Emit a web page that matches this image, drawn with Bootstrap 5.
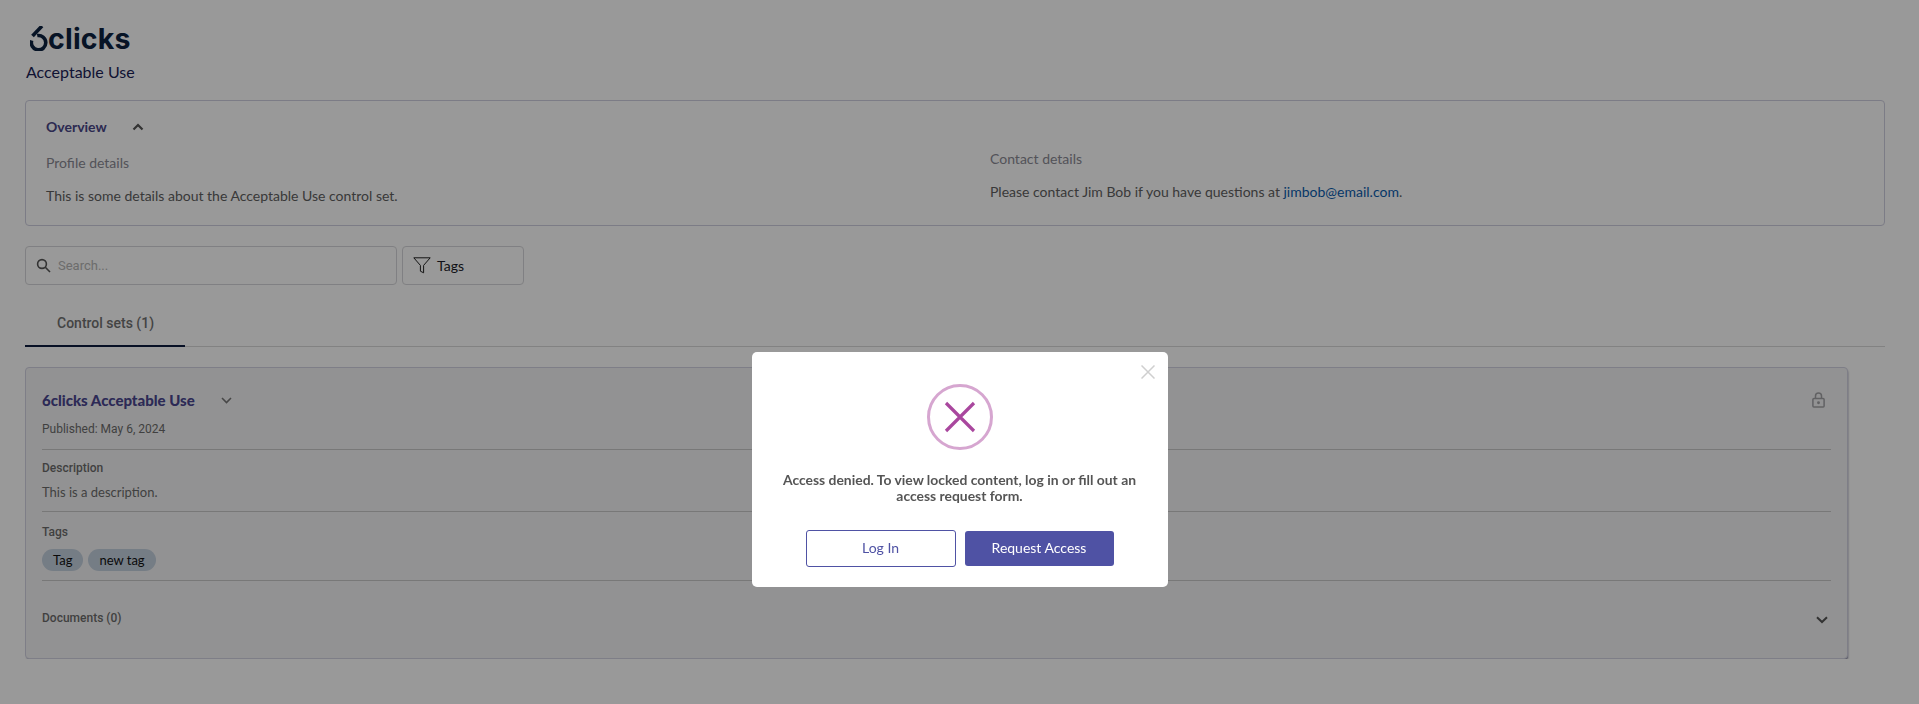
<!DOCTYPE html>
<html lang="en">
<head>
    <meta charset="UTF-8">
    <meta name="viewport" content="width=device-width, initial-scale=1.0">
    <title>Acceptable Use</title>
    <link href="https://cdn.jsdelivr.net/npm/bootstrap@5.3.0/dist/css/bootstrap.min.css" rel="stylesheet">
    <style>
        body {
            background: #fff;
            font-family: 'Lato', sans-serif;
            font-size: 14px;
            color: #555;
            overflow: hidden;
        }
        .page-wrap {
            padding: 25px 34px 0 25px;
        }
        .logo-row {
            height: 27px;
            padding-left: 5px;
            color: #0d2240;
            margin-bottom: 8px;
        }
        .logo-text {
            font-family: 'Inter', sans-serif;
            font-weight: 700;
            font-size: 28.500px;
            line-height: 27px;
            letter-spacing: .2px;
        }
        .page-title {
            font-size: 16px;
            line-height: 24px;
            color: #1b2255;
            margin: 0 0 16px 1px;
        }
        .overview-box {
            height: 126px;
            border: 1px solid #cfcfe0;
            border-radius: 4px;
            padding: 16px 20px;
        }
        .overview-head {
            color: #4a4688;
            font-weight: 700;
            line-height: 20px;
            gap: 25px;
            margin-bottom: 16px;
        }
        .ov-left {
            flex: 0 0 944px;
        }
        .ov-right {
            margin-top: -4px;
        }
        .ov-label {
            color: #8a8a94;
            line-height: 20px;
            margin-bottom: 13px;
        }
        .ov-text {
            line-height: 20px;
            color: #606060;
        }
        .ov-text a {
            color: #0b5cad;
            text-decoration: none;
        }
        .filter-row {
            gap: 5px;
            margin-top: 20px;
        }
        .search-box {
            width: 372px;
            height: 39px;
            border: 1px solid #d6d6da;
            border-radius: 4px;
            padding-left: 10px;
            gap: 7px;
        }
        .search-box input {
            border: 0;
            outline: 0;
            background: transparent;
            flex: 1;
            font-family: 'Roboto', sans-serif;
            font-size: 13px;
            padding: 0;
        }
        .search-box input::placeholder {
            color: #b5b5b5;
        }
        .tags-btn {
            width: 122px;
            height: 39px;
            border: 1px solid #d6d6da;
            border-radius: 4px;
            padding: 0 0 0 10px;
            gap: 6px;
            color: #1c1c28;
            font-size: 14px;
            background: transparent;
        }
        .tabs-line {
            margin-top: 21px;
            border-bottom: 1px solid #d9d9d9;
            height: 41px;
        }
        .tabs-line .nav-link {
            width: 160px;
            height: 41px;
            padding: 7px 0 0 32px;
            border: 0;
            border-bottom: 2px solid #0d1b3e;
            border-radius: 0;
            font-family: 'Roboto', sans-serif;
            font-weight: 500;
            font-size: 14px;
            line-height: 20px;
            color: #727272;
            background: transparent;
        }
        .set-box {
            width: 1823px;
            height: 292px;
            margin-top: 20px;
            background: #f4f4f5;
            border: 1px solid #d2d2e2;
            border-radius: 4px;
            box-shadow: 1px 2px 2px -1px rgba(40, 40, 80, .6);
            padding: 0 16px;
        }
        .set-head {
            height: 82px;
            border-bottom: 1px solid #c9c9c9;
            padding-top: 22px;
        }
        .set-title {
            color: #4a4690;
            font-weight: 900;
            font-size: 15px;
            line-height: 20px;
        }
        .title-chevron {
            margin-left: 26px;
        }
        .set-date {
            font-family: 'Roboto', sans-serif;
            font-size: 12px;
            line-height: 16px;
            color: #6c6c6c;
            margin-top: 11px;
        }
        .set-label {
            font-family: 'Roboto', sans-serif;
            font-weight: 500;
            font-size: 12px;
            line-height: 16px;
            color: #6c6c6c;
        }
        .set-row {
            border-bottom: 1px solid #c9c9c9;
        }
        .desc-row {
            height: 62px;
            padding-top: 10px;
        }
        .tags-row {
            height: 69px;
            padding-top: 12px;
        }
        .desc-text {
            font-size: 13px;
            line-height: 18px;
            color: #6c6c6c;
            margin-top: 7px;
        }
        .tag-pill {
            height: 22px;
            border-radius: 11px;
            padding: 0 11px;
            background: #c3d0de;
            color: #111;
            font-size: 13px;
            line-height: 22px;
        }
        .tag-list {
            gap: 5px;
            margin-top: 9px;
        }
        .docs-row {
            height: 73px;
            padding-right: 3px;
        }
        .docs-chevron {
            margin-top: 4px;
        }
        .lock-icon {
            margin-right: 6px;
        }
        .access-dialog {
            width: 416px;
            max-width: 416px;
            margin: 352px auto 0;
        }
        .access-content {
            height: 235px;
            border: 0;
            border-radius: 5px;
            position: relative;
        }
        .access-close {
            position: absolute;
            top: 13px;
            right: 13px;
            padding: 0;
            border: 0;
            background: transparent;
            line-height: 0;
        }
        .access-icon {
            margin-top: 32px;
        }
        .access-text {
            font-weight: 700;
            font-size: 13.900px;
            line-height: 16px;
            color: #555;
            margin-top: 22px;
            padding: 0 20px;
        }
        .access-btns {
            gap: 9px;
            margin-top: 26px;
            align-items: center;
        }
        .btn-outline-access {
            width: 150px;
            height: 37px;
            border: 1px solid #4f52a4;
            border-radius: 3px;
            color: #4f52a4;
            background: #fff;
            font-size: 14px;
            padding: 0 0 2px;
        }
        .btn-access {
            width: 149px;
            height: 35px;
            border: 0;
            border-radius: 3px;
            color: #fff;
            background: #4f52a4;
            font-size: 14px;
            padding: 0 0 2px;
        }
        .modal-backdrop {
            --bs-backdrop-opacity: .4;
        }
    </style>
</head>
<body>
    <div class="page-wrap">
        <div class="logo-row d-flex align-items-center">
            <svg width="18" height="25" viewBox="0 0 18 25" fill="none" stroke="currentColor" stroke-width="3.600">
                <path d="M12 0 2.500 10"/>
                <path d="M1.700 14.500A7.200 7.200 0 1 0 7.200 9.600"/>
            </svg>
            <span class="logo-text">clicks</span>
        </div>
        <h1 class="page-title fw-normal">Acceptable Use</h1>

        <div class="overview-box">
            <div class="overview-head d-flex align-items-center">
                <span>Overview</span>
                <svg width="12" height="8" viewBox="0 0 12 8" fill="none" stroke="#555" stroke-width="2.200"><path d="M1.500 6.500 6 2l4.500 4.500"/></svg>
            </div>
            <div class="d-flex">
                <div class="ov-left">
                    <div class="ov-label">Profile details</div>
                    <div class="ov-text">This is some details about the Acceptable Use control set.</div>
                </div>
                <div class="ov-right">
                    <div class="ov-label">Contact details</div>
                    <div class="ov-text">Please contact Jim Bob if you have questions at <a href="#">jimbob@email.com</a>.</div>
                </div>
            </div>
        </div>

        <div class="filter-row d-flex">
            <div class="search-box d-flex align-items-center">
                <svg width="15" height="15" viewBox="0 0 15 15" fill="none" stroke="#555" stroke-width="1.600"><circle cx="6" cy="6" r="4.400"/><path d="M9.300 9.300 14 14"/></svg>
                <input type="text" placeholder="Search...">
            </div>
            <button type="button" class="tags-btn btn d-flex align-items-center">
                <svg width="18" height="17" viewBox="0 0 18 17" fill="none" stroke="#222" stroke-width="1"><path d="M.8.8h16.400l-6.600 7.600v7.400l-3.200-1.600V8.400z"/></svg>
                Tags
            </button>
        </div>

        <ul class="nav tabs-line">
            <li class="nav-item"><a class="nav-link active" href="#">Control sets (1)</a></li>
        </ul>

        <div class="set-box">
            <div class="set-head">
                <div class="d-flex align-items-center">
                    <span class="set-title">6clicks Acceptable Use</span>
                    <svg class="title-chevron" width="11" height="7" viewBox="0 0 11 7" fill="none" stroke="#777" stroke-width="1.600"><path d="M1 1l4.500 4.500L10 1"/></svg>
                    <svg class="lock-icon ms-auto" width="13" height="16" viewBox="0 0 13 16" fill="none" stroke="#a2a2a6" stroke-width="1.500"><rect x=".9" y="6.500" width="11.200" height="8.500" rx="1"/><path d="M3.500 6.500V4a3 3 0 0 1 6 0v2.500"/><circle cx="6.500" cy="10.700" r=".7" fill="#a2a2a6"/></svg>
                </div>
                <div class="set-date">Published: May 6, 2024</div>
            </div>
            <div class="set-row desc-row">
                <div class="set-label">Description</div>
                <div class="desc-text">This is a description.</div>
            </div>
            <div class="set-row tags-row">
                <div class="set-label">Tags</div>
                <div class="tag-list d-flex">
                    <span class="tag-pill">Tag</span>
                    <span class="tag-pill">new tag</span>
                </div>
            </div>
            <div class="docs-row d-flex align-items-center justify-content-between">
                <span class="set-label">Documents (0)</span>
                <svg class="docs-chevron" width="12" height="8" viewBox="0 0 12 8" fill="none" stroke="#555" stroke-width="2"><path d="M1 1.200 6 6l5-4.800"/></svg>
            </div>
        </div>
    </div>

    <div class="modal-backdrop show"></div>
    <div class="modal d-block" tabindex="-1">
        <div class="modal-dialog access-dialog">
            <div class="modal-content access-content text-center">
                <button type="button" class="access-close" aria-label="Close">
                    <svg width="14" height="14" viewBox="0 0 14 14" fill="none" stroke="#cfcfcf" stroke-width="1.500"><path d="M.5.5l13 13M13.500.5l-13 13"/></svg>
                </button>
                <div class="access-icon">
                    <svg width="66" height="66" viewBox="0 0 66 66" fill="none">
                        <circle cx="33" cy="33" r="31.500" stroke="#d6a6d0" stroke-width="3"/>
                        <path d="M19 19l28 28M47 19 19 47" stroke="#a9479e" stroke-width="3.200"/>
                    </svg>
                </div>
                <p class="access-text mb-0">Access denied. To view locked content, log in or fill out an access request form.</p>
                <div class="access-btns d-flex justify-content-center">
                    <button type="button" class="btn btn-outline-access">Log In</button>
                    <button type="button" class="btn btn-access">Request Access</button>
                </div>
            </div>
        </div>
    </div>

    <script src="https://cdn.jsdelivr.net/npm/bootstrap@5.3.0/dist/js/bootstrap.bundle.min.js"></script>
</body>
</html>
